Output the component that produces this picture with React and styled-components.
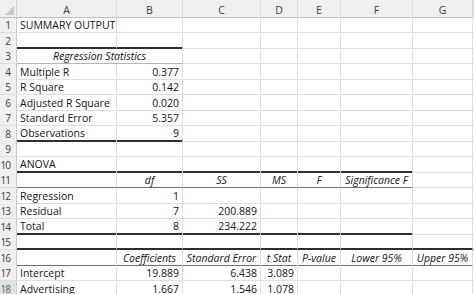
import React from 'react'
import styled, { createGlobalStyle } from 'styled-components'

const GlobalStyle = createGlobalStyle`
  html, body {
    margin: 0;
    padding: 0;
    background: #fff;
    overflow: hidden;
  }
  body {
    font-family: 'Open Sans', 'Liberation Sans', sans-serif;
  }
`

const COLS = '17px 100px 66px 78px 37px 43px 72px 60px 1fr'
const LETTERS = ['A', 'B', 'C', 'D', 'E', 'F', 'G']

const Sheet = styled.div`
  width: 474px;
  height: 294px;
  overflow: hidden;
  background: #fff;
`

const Row = styled.div`
  display: grid;
  grid-template-columns: ${COLS};
  height: ${p => (p.$head ? '17px' : '15.5px')};
`

const Corner = styled.div`
  position: relative;
  background: #efefef;
  border-right: 1px solid #d4d4d4;
  border-bottom: 1px solid #bfbfbf;
  box-sizing: border-box;

  &::after {
    content: '';
    position: absolute;
    right: 2px;
    bottom: 2px;
    width: 0;
    height: 0;
    border-left: 9px solid transparent;
    border-bottom: 9px solid #c9c9c9;
  }
`

const ColHead = styled.div`
  display: flex;
  align-items: center;
  justify-content: center;
  background: #efefef;
  border-right: 1px solid #d9d9d9;
  border-bottom: 1px solid #bfbfbf;
  box-sizing: border-box;
  color: #3c3c3c;
  font-size: 10.5px;
  padding-top: 3px;
`

const RowNum = styled.div`
  display: flex;
  align-items: center;
  justify-content: flex-end;
  padding: 1px 6px 0 0;
  background: ${p => (p.$active ? '#e1e1e1' : '#efefef')};
  color: ${p => (p.$active ? '#3d7a53' : '#3c3c3c')};
  border-right: 1px solid #c9c9c9;
  border-bottom: 1px solid #dedede;
  box-sizing: border-box;
  font-size: 10px;
  letter-spacing: -1px;
  white-space: nowrap;
`

const lines = {
  thick: '2px solid #2e2e2e',
  thin: '1px solid #6f6f6f',
  soft: '1px solid #b4b4b4',
}

const Cell = styled.div`
  grid-column: span ${p => p.$span || 1};
  display: flex;
  align-items: flex-end;
  justify-content: ${p =>
    p.$align === 'right' ? 'flex-end' : p.$align === 'center' ? 'center' : 'flex-start'};
  padding: 0 3px;
  box-sizing: border-box;
  border-right: 1px solid #dedede;
  border-bottom: ${p => lines[p.$line] || '1px solid #dedede'};
  color: #141414;
  font-size: 10.5px;
  font-weight: 500;
  font-style: ${p => (p.$italic ? 'italic' : 'normal')};
  line-height: 13px;
  white-space: nowrap;
`

// helpers for building the output rows
const txt = t => ({ t })
const num = t => ({ t, align: 'right' })
const head = (t, line) => ({ t, align: 'center', italic: true, line })

const rows = [
  [txt('SUMMARY OUTPUT')],
  [{ line: 'thick' }, { line: 'thick' }],
  [{ t: 'Regression Statistics', align: 'center', italic: true, span: 2, line: 'soft' }],
  [txt('Multiple R'), num('0.377')],
  [txt('R Square'), num('0.142')],
  [txt('Adjusted R Square'), num('0.020')],
  [txt('Standard Error'), num('5.357')],
  [{ t: 'Observations', line: 'thick' }, { t: '9', align: 'right', line: 'thick' }],
  [],
  [
    { t: 'ANOVA', line: 'thick' },
    { line: 'thick' }, { line: 'thick' }, { line: 'thick' }, { line: 'thick' }, { line: 'thick' },
  ],
  [
    { line: 'thin' },
    head('df', 'thin'), head('SS', 'thin'), head('MS', 'thin'), head('F', 'thin'),
    head('Significance F', 'thin'),
  ],
  [txt('Regression'), num('1')],
  [txt('Residual'), num('7'), num('200.889')],
  [
    { t: 'Total', line: 'thick' },
    { t: '8', align: 'right', line: 'thick' },
    { t: '234.222', align: 'right', line: 'thick' },
    { line: 'thick' }, { line: 'thick' }, { line: 'thick' },
  ],
  [
    { line: 'thick' }, { line: 'thick' }, { line: 'thick' }, { line: 'thick' },
    { line: 'thick' }, { line: 'thick' }, { line: 'thick' },
  ],
  [
    { line: 'thin' },
    head('Coefficients', 'thin'), head('Standard Error', 'thin'), head('t Stat', 'thin'),
    head('P-value', 'thin'), head('Lower 95%', 'thin'), head('Upper 95%', 'thin'),
  ],
  [txt('Intercept'), num('19.889'), num('6.438'), num('3.089')],
  [txt('Advertising'), num('1.667'), num('1.546'), num('1.078')],
]

function SheetRow({ n, cells }) {
  const filled = []
  let used = 0
  cells.forEach(c => {
    filled.push(c)
    used += c.span || 1
  })
  while (used < LETTERS.length + 1) {
    filled.push({})
    used += 1
  }
  return (
    <Row>
      <RowNum $active={n === 18}>{n}</RowNum>
      {filled.map((c, i) => (
        <Cell key={i} $span={c.span} $align={c.align} $italic={c.italic} $line={c.line}>
          {c.t}
        </Cell>
      ))}
    </Row>
  )
}

export default function App() {
  return (
    <>
      <GlobalStyle />
      <Sheet>
        <Row $head>
          <Corner />
          {LETTERS.map(l => (
            <ColHead key={l}>{l}</ColHead>
          ))}
          <ColHead />
        </Row>
        {rows.map((cells, i) => (
          <SheetRow key={i} n={i + 1} cells={cells} />
        ))}
      </Sheet>
    </>
  )
}
